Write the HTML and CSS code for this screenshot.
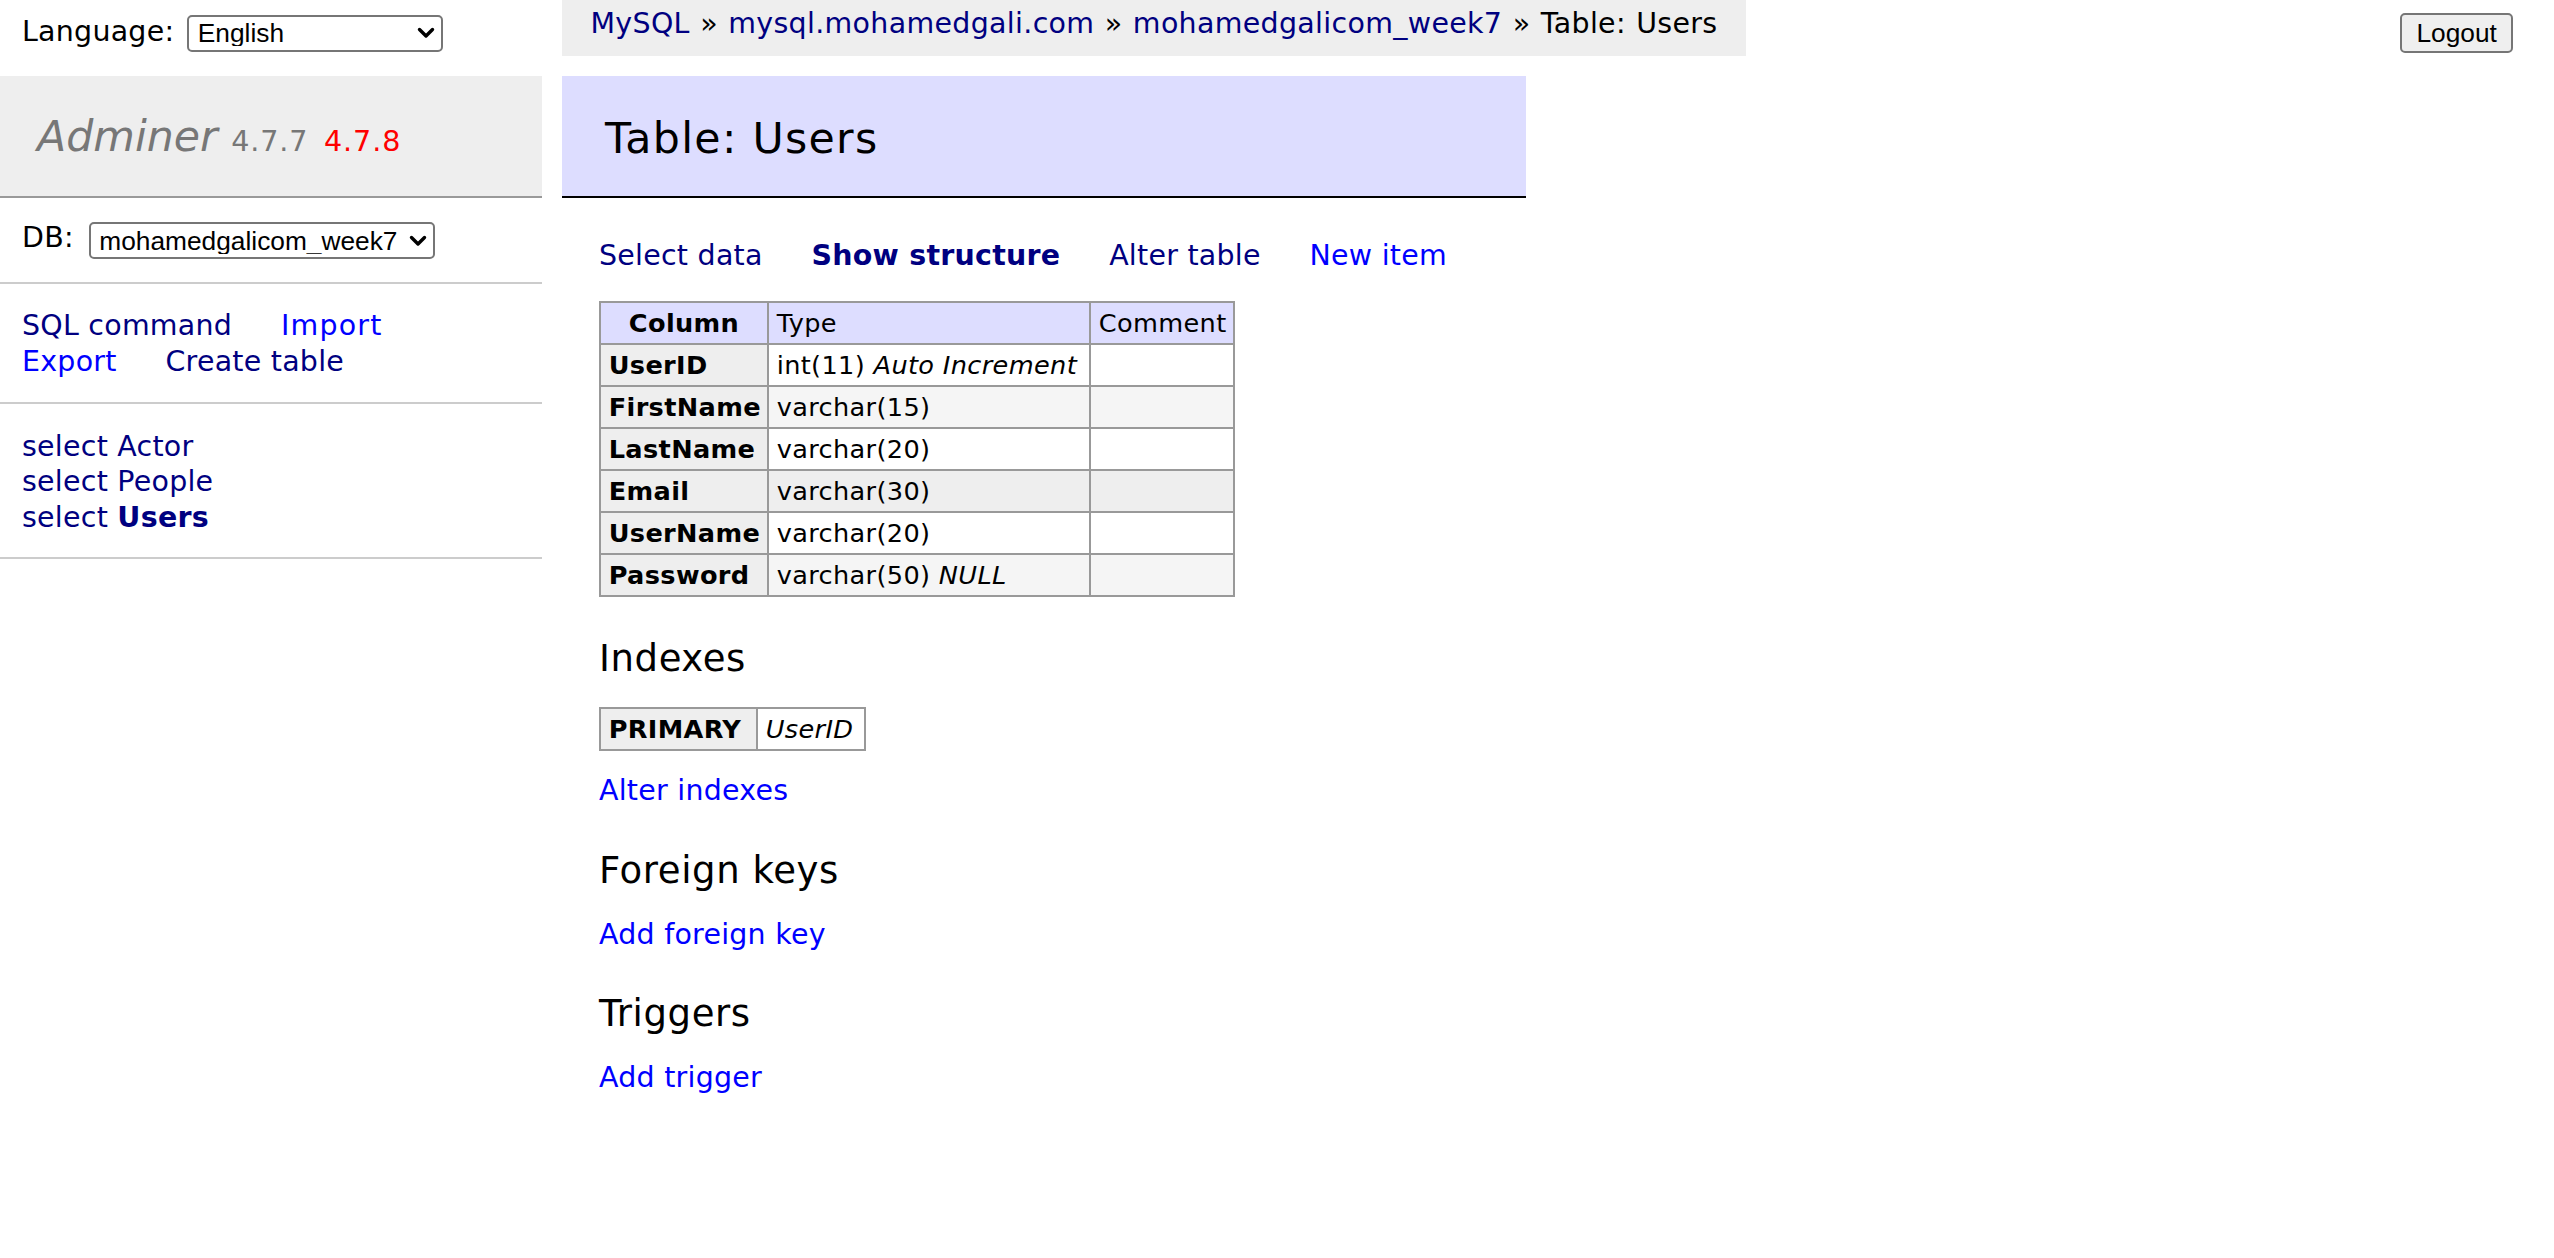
FILE: index.html
```html
<!DOCTYPE html>
<html lang="en">
<head>
<meta charset="utf-8">
<title>Table: Users - mohamedgalicom_week7 - Adminer</title>
<link rel="stylesheet" href="styles.css">
</head>
<body>
<div class="page">
  <aside class="sidebar">
    <form class="lang">
      <label class="field-label" for="lang">Language:</label>
      <span class="select select-lang">
        <select id="lang"><option>English</option></select>
        <svg class="chev" viewBox="0 0 18 12" width="18" height="12"><path d="M2.5 2.5 L9 9 L15.5 2.5" fill="none" stroke="#000" stroke-width="3.4" stroke-linecap="round" stroke-linejoin="round"/></svg>
      </span>
    </form>
    <nav class="menu">
      <h1 class="brand"><a class="brand-name" href="#">Adminer</a> <span class="version">4.7.7</span> <a class="new-version" href="#">4.7.8</a></h1>
      <form class="menu-db">
        <label class="field-label db-label" for="db">DB:</label>
        <span class="select select-db">
          <select id="db"><option>mohamedgalicom_week7</option></select>
          <svg class="chev" viewBox="0 0 18 12" width="18" height="12"><path d="M2.5 2.5 L9 9 L15.5 2.5" fill="none" stroke="#000" stroke-width="3.4" stroke-linecap="round" stroke-linejoin="round"/></svg>
        </span>
      </form>
      <p class="menu-links">
        <a class="nav" href="#">SQL command</a> <a class="wide" href="#">Import</a><br>
        <a href="#">Export</a> <a class="nav" href="#">Create table</a>
      </p>
      <ul class="tables">
        <li><a class="nav" href="#">select</a> <a class="nav" href="#">Actor</a></li>
        <li><a class="nav" href="#">select</a> <a class="nav" href="#">People</a></li>
        <li><a class="nav" href="#">select</a> <a class="nav active" href="#">Users</a></li>
      </ul>
    </nav>
  </aside>

  <main class="main">
    <p class="breadcrumb"><a class="nav" href="#">MySQL</a> &raquo; <a class="nav" href="#">mysql.mohamedgali.com</a> &raquo; <a class="nav" href="#">mohamedgalicom_week7</a> &raquo; Table: Users</p>
    <div class="content">
      <h2 class="title">Table: Users</h2>
      <p class="links"><a class="nav" href="#">Select data</a> <a class="nav active" href="#">Show structure</a> <a class="nav" href="#">Alter table</a> <a href="#">New item</a></p>

      <table class="grid structure">
        <colgroup><col class="c-col"><col class="c-type"><col class="c-comment"></colgroup>
        <thead>
          <tr><th>Column</th><td>Type</td><td>Comment</td></tr>
        </thead>
        <tbody>
          <tr><th>UserID</th><td>int(11) <i>Auto Increment</i></td><td></td></tr>
          <tr class="even"><th>FirstName</th><td>varchar(15)</td><td></td></tr>
          <tr><th>LastName</th><td>varchar(20)</td><td></td></tr>
          <tr class="hover"><th>Email</th><td>varchar(30)</td><td></td></tr>
          <tr><th>UserName</th><td>varchar(20)</td><td></td></tr>
          <tr class="even"><th>Password</th><td>varchar(50) <i>NULL</i></td><td></td></tr>
        </tbody>
      </table>

      <h3 class="section">Indexes</h3>
      <table class="grid indexes">
        <colgroup><col class="i-type"><col class="i-cols"></colgroup>
        <tbody>
          <tr><th>PRIMARY</th><td><i>UserID</i></td></tr>
        </tbody>
      </table>
      <p class="action"><a href="#">Alter indexes</a></p>

      <h3 class="section">Foreign keys</h3>
      <p class="action"><a href="#">Add foreign key</a></p>

      <h3 class="section">Triggers</h3>
      <p class="action"><a href="#">Add trigger</a></p>
    </div>
  </main>

  <form class="logout-form"><button class="logout" type="button">Logout</button></form>
</div>
</body>
</html>
```

FILE: styles.css
```css
html, body {
  margin: 0;
  padding: 0;
}

body {
  font: 28.46px/1.25 "DejaVu Sans", Verdana, sans-serif;
  letter-spacing: 0.25px;
  color: #000;
  background: #fff;
}

a {
  color: #0000ff;
  text-decoration: none;
}

a.nav {
  color: #000080;
}

.active {
  font-weight: bold;
}

.page {
  display: flex;
  align-items: flex-start;
  min-height: 1258px;
}

/* ---------- sidebar ---------- */
.sidebar {
  width: 542px;
  flex: none;
}

.lang {
  display: flex;
  align-items: center;
  gap: 13px;
  height: 37px;
  margin: 0;
  padding: 14.5px 0 0 22px;
}

.field-label {
  line-height: 30px;
  padding-bottom: 2px;
  white-space: nowrap;
}

.select {
  position: relative;
  display: inline-flex;
  align-items: center;
  box-sizing: border-box;
  height: 37px;
  border: 2px solid #767676;
  border-radius: 5px;
  background: #fff;
  letter-spacing: 0;
}

.select select {
  -webkit-appearance: none;
  appearance: none;
  border: 0;
  outline: none;
  background: transparent;
  margin: 0;
  padding: 0 0 0 8.5px;
  width: 100%;
  height: 100%;
  font: 26.3px/1 "Liberation Sans", Arial, sans-serif;
  color: #000;
}

.chev {
  position: absolute;
  right: 6px;
  top: 50%;
  margin-top: -6px;
  pointer-events: none;
}

.select-lang {
  width: 256px;
}

.select-db {
  width: 346px;
  height: 36.5px;
}

.menu {
  margin-top: 24.5px;
}

.brand {
  margin: 0;
  height: 53.4px;
  padding: 33.5px 0 33.1px 37px;
  font-size: 42.7px;
  line-height: 53.4px;
  font-weight: normal;
  letter-spacing: 0;
  background: #eee;
  border-bottom: 2px solid #999;
  white-space: nowrap;
  overflow: hidden;
}

.brand-name {
  color: #777;
  font-style: italic;
}

.version,
.new-version {
  font-size: 28.6px;
  line-height: 1;
  letter-spacing: 0.9px;
}

.version {
  color: #777;
}

.new-version {
  color: #ff0000;
  margin-left: 2px;
}

.menu-db {
  display: flex;
  align-items: center;
  gap: 15px;
  height: 36.5px;
  margin: 0;
  padding: 24.5px 0 23px 22px;
  border-bottom: 2px solid #ccc;
}

.db-label {
  padding-bottom: 5px;
}

.menu-links {
  margin: 0;
  padding: 24.3px 0 22.5px 22px;
  line-height: 35.6px;
  border-bottom: 2px solid #ccc;
}

.menu-links a {
  margin-right: 39.5px;
  white-space: nowrap;
}

.menu-links a.wide {
  letter-spacing: 1.2px;
}

.tables {
  list-style: none;
  margin: 0;
  padding: 25px 0 22px 22px;
  line-height: 35.3px;
  border-bottom: 2px solid #ccc;
  white-space: nowrap;
}

/* ---------- main ---------- */
.main {
  flex: none;
  display: flex;
  flex-direction: column;
  align-items: flex-start;
  margin-left: 20px;
}

.breadcrumb {
  margin: 0;
  height: 56px;
  line-height: 47px;
  padding: 0 28.5px;
  background: #eee;
  white-space: nowrap;
  letter-spacing: 0.32px;
  word-spacing: 1px;
}

.content {
  padding: 20px 0 40px 37px;
}

.title {
  margin: 0 0 0 -37px;
  padding: 35.5px 0 31.1px 43px;
  font-size: 42.7px;
  line-height: 53.4px;
  font-weight: normal;
  letter-spacing: 1.3px;
  background: #ddf;
  border-bottom: 2px solid #000;
}

.links {
  margin: 40px 39.5px 0 0;
  line-height: 35.6px;
  white-space: nowrap;
}

.links a {
  margin-right: 39.5px;
}

.grid {
  border-collapse: collapse;
  font-size: 25.6px;
  table-layout: fixed;
  letter-spacing: 0.35px;
}

.grid th,
.grid td {
  border: 2px solid #999;
  padding: 5px 7.7px;
  line-height: 30px;
  text-align: left;
  white-space: nowrap;
  overflow: hidden;
}

.grid th {
  background: #eee;
}

.grid tbody td {
  background: #fff;
}

.grid tbody tr.even td {
  background: #f5f5f5;
}

.grid tbody tr.hover td {
  background: #eee;
}

.grid thead th,
.grid thead td {
  background: #ddf;
}

.grid thead th {
  text-align: center;
  padding: 5px 12.8px;
}

.structure {
  margin-top: 27px;
  width: 634px;
}

.c-col { width: 168px; }
.c-type { width: 322px; }
.c-comment { width: 144px; }

.section {
  margin: 39px 0 0;
  font-size: 37px;
  line-height: 46.3px;
  font-weight: normal;
  letter-spacing: 0.6px;
}

.indexes {
  margin-top: 25px;
  width: 265px;
}

.i-type { width: 157px; }
.i-cols { width: 108px; }

.action {
  margin: 22.5px 0 0;
  line-height: 35.6px;
}

/* ---------- logout ---------- */
.logout-form {
  margin: 12.7px 41px 0 auto;
}

.logout {
  box-sizing: border-box;
  width: 112.6px;
  height: 40.6px;
  padding: 0;
  font: 26.3px/1 "Liberation Sans", Arial, sans-serif;
  letter-spacing: 0;
  color: #000;
  background: #efefef;
  border: 2px solid #767676;
  border-radius: 5px;
}
```
